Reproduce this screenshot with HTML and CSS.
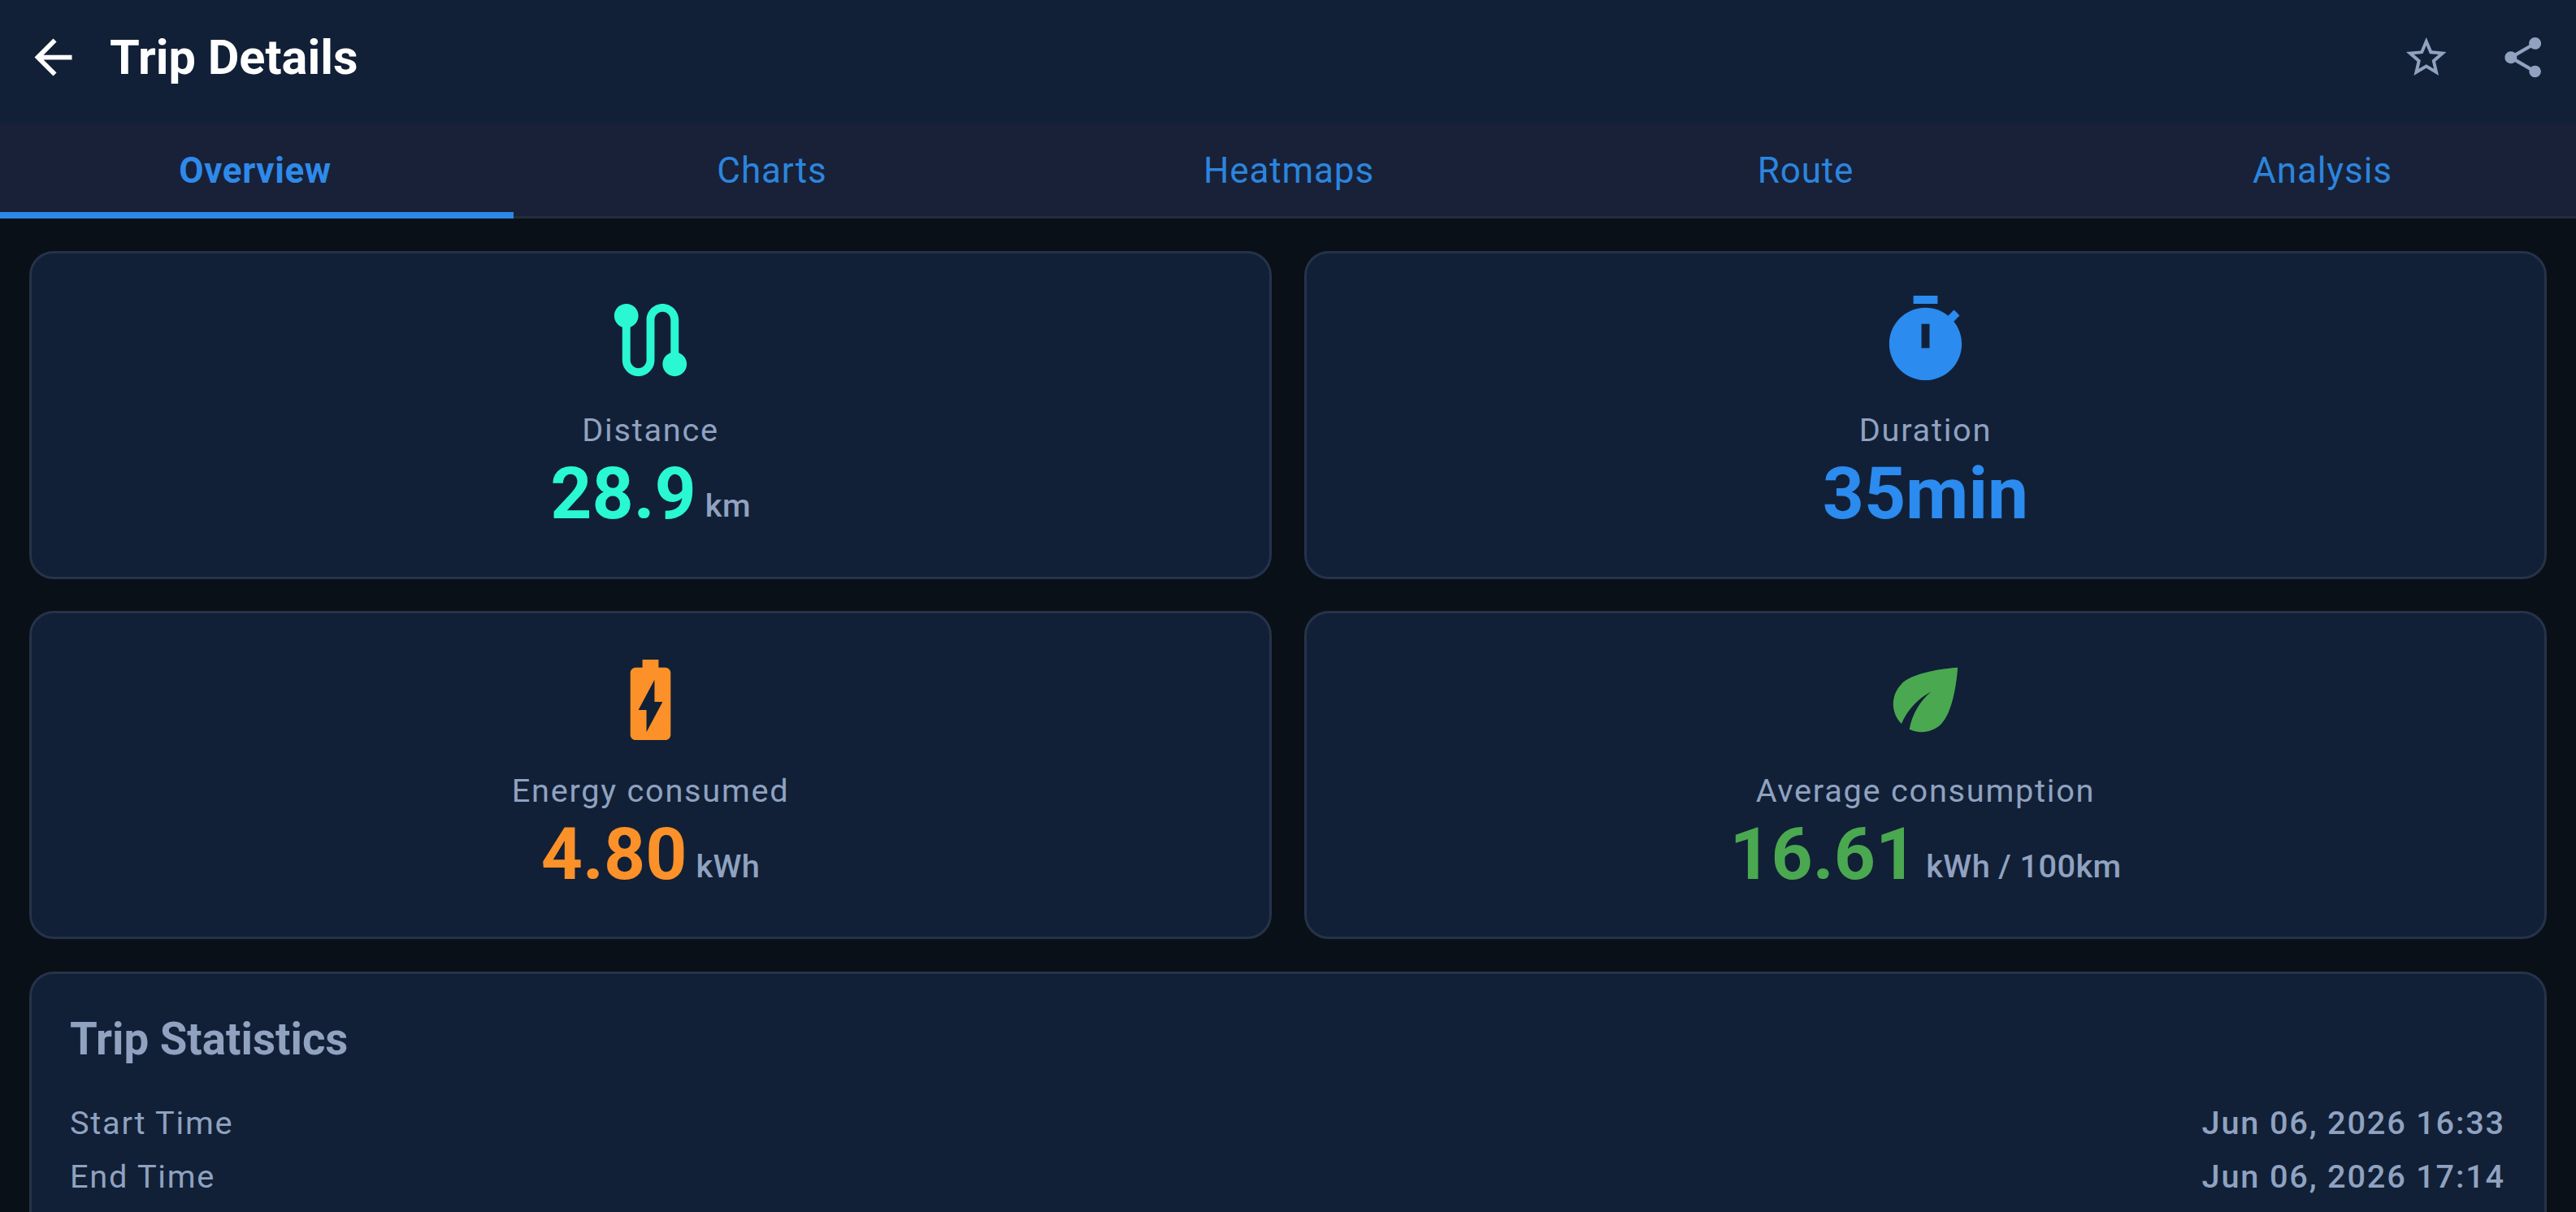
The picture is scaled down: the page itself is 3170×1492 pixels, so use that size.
FILE: index.html
```html
<!DOCTYPE html>
<html lang="en">
<head>
<meta charset="utf-8">
<title>Trip Details</title>
<link rel="stylesheet" href="styles.css">
</head>
<body>
<header class="app-bar">
  <svg class="back" viewBox="0 0 24 24"><path d="M20 11H7.83l5.59-5.59L12 4l-8 8 8 8 1.41-1.41L7.83 13H20v-2z"/></svg>
  <h1 class="app-title">Trip Details</h1>
  <div class="actions">
    <svg class="action" viewBox="0 0 24 24"><path d="M22 9.24l-7.19-.62L12 2 9.19 8.63 2 9.24l5.46 4.73L5.82 21 12 17.27 18.18 21l-1.63-7.03L22 9.24zM12 15.4l-3.76 2.27 1-4.28-3.32-2.88 4.38-.38L12 6.1l1.71 4.04 4.38.38-3.32 2.88 1 4.28L12 15.4z"/></svg>
    <svg class="action" viewBox="0 0 24 24"><path d="M18 16.08c-.76 0-1.44.3-1.96.77L8.91 12.7c.05-.23.09-.46.09-.7s-.04-.47-.09-.7l7.05-4.11c.54.5 1.25.81 2.04.81 1.66 0 3-1.34 3-3s-1.34-3-3-3-3 1.34-3 3c0 .24.04.47.09.7L8.04 9.81C7.5 9.31 6.79 9 6 9c-1.66 0-3 1.34-3 3s1.34 3 3 3c.79 0 1.5-.31 2.04-.81l7.12 4.16c-.05.21-.08.43-.08.65 0 1.61 1.31 2.92 2.92 2.92s2.92-1.31 2.92-2.92-1.31-2.92-2.92-2.92z"/></svg>
  </div>
</header>
<nav class="tabs">
  <a class="tab tab-active">Overview</a>
  <a class="tab">Charts</a>
  <a class="tab">Heatmaps</a>
  <a class="tab">Route</a>
  <a class="tab">Analysis</a>
</nav>
<main class="content">
  <section class="metrics">
    <article class="card metric teal">
      <svg class="metric-icon" viewBox="0 0 24 24"><path d="M19 15.18V7c0-2.21-1.79-4-4-4s-4 1.79-4 4v10c0 1.1-.9 2-2 2s-2-.9-2-2V8.82C8.16 8.4 9 7.3 9 6c0-1.66-1.34-3-3-3S3 4.34 3 6c0 1.3.84 2.4 2 2.82V17c0 2.21 1.79 4 4 4s4-1.79 4-4V7c0-1.1.9-2 2-2s2 .9 2 2v8.18c-1.16.41-2 1.51-2 2.82 0 1.66 1.34 3 3 3s3-1.34 3-3c0-1.3-.84-2.4-2-2.82z"/></svg>
      <div class="label">Distance</div>
      <div class="reading"><span class="value">28.9</span><span class="unit">km</span></div>
    </article>
    <article class="card metric blue">
      <svg class="metric-icon" viewBox="0 0 24 24"><path fill-rule="evenodd" d="M9 1h6v2H9zM19.03 7.39l1.42-1.42c-.43-.51-.9-.99-1.41-1.41l-1.42 1.42C16.07 4.74 14.12 4 12 4c-4.97 0-9 4.03-9 9s4.02 9 9 9 9-4.03 9-9c0-2.12-.74-4.07-1.97-5.61zM11 8h2v6h-2z"/></svg>
      <div class="label">Duration</div>
      <div class="reading"><span class="value">35min</span></div>
    </article>
    <article class="card metric orange">
      <svg class="metric-icon" viewBox="0 0 24 24"><path d="M15.67 4H14V2h-4v2H8.33C7.6 4 7 4.6 7 5.33v15.33C7 21.4 7.6 22 8.33 22h7.33c.74 0 1.34-.6 1.34-1.33V5.33C17 4.6 16.4 4 15.67 4zM11 20v-5.5H9L13 7v5.5h2L11 20z"/></svg>
      <div class="label">Energy consumed</div>
      <div class="reading"><span class="value">4.80</span><span class="unit">kWh</span></div>
    </article>
    <article class="card metric green">
      <svg class="metric-icon" viewBox="0 0 24 24"><path d="M6.05 8.05c-2.73 2.73-2.73 7.15-.02 9.88 1.47-3.4 4.09-6.24 7.36-7.93-2.77 2.34-4.71 5.61-5.39 9.32 2.6 1.23 5.8.78 7.95-1.37C19.43 14.47 20 4 20 4S9.53 4.57 6.05 8.05z"/></svg>
      <div class="label">Average consumption</div>
      <div class="reading"><span class="value">16.61</span><span class="unit">kWh / 100km</span></div>
    </article>
  </section>
  <section class="card stats">
    <h2 class="stats-title">Trip Statistics</h2>
    <div class="stat"><span>Start Time</span><span class="stat-value">Jun 06, 2026 16:33</span></div>
    <div class="stat"><span>End Time</span><span class="stat-value">Jun 06, 2026 17:14</span></div>
  </section>
</main>
</body>
</html>
```
FILE: styles.css
```css
* { box-sizing: border-box; }

body {
  margin: 0;
  height: 1492px;
  overflow: hidden;
  display: flex;
  flex-direction: column;
  background: #0a1017;
  color: #90a2c0;
  font-family: Roboto, sans-serif;
}

svg { display: block; fill: currentColor; flex: none; }

/* Top bar */
.app-bar {
  flex: none;
  height: 152px;
  padding: 0 36px 11px 31px;
  display: flex;
  align-items: center;
  background: #112037;
}
.back { width: 69px; height: 69px; color: #fff; }
.app-title {
  margin: 0 0 0 35px;
  font-size: 59.5px;
  line-height: 70px;
  font-weight: 700;
  color: #fff;
}
.actions { margin-left: auto; display: flex; gap: 59px; }
.action { width: 59.5px; height: 59.5px; }

/* Tabs */
.tabs {
  flex: none;
  height: 117px;
  display: grid;
  grid-template-columns: repeat(5, 632px);
  gap: 4px;
  width: 100%;
  overflow: hidden;
  background: #182138;
  box-shadow: inset 0 -3px #222c3b;
}
.tab {
  display: flex;
  align-items: center;
  justify-content: center;
  padding-right: 4px;
  padding-top: 7px;
  border-bottom: 8px solid transparent;
  font-size: 44px;
  line-height: 52px;
  letter-spacing: 0.9px;
  color: #2c85de;
}
.tab-active {
  font-weight: 700;
  letter-spacing: 0.6px;
  color: #2e8aea;
  border-bottom-color: #2c87e8;
}

/* Cards */
.content {
  flex: 1;
  padding: 40px 36px 0;
  display: flex;
  flex-direction: column;
  gap: 39.7px;
}
.card {
  background: #112037;
  border: 3px solid #25334a;
  border-radius: 30px;
}
.metrics {
  display: grid;
  grid-template-columns: 1fr 1fr;
  gap: 39.7px;
}
.metric {
  height: 403.7px;
  padding-top: 46.8px;
  display: flex;
  flex-direction: column;
  align-items: center;
}
.metric-icon { width: 119px; height: 119px; color: var(--accent); }
.label {
  margin-top: 24.7px;
  font-size: 39.7px;
  line-height: 56px;
  letter-spacing: 1.75px;
}
.reading { display: flex; align-items: flex-end; gap: 11px; }
.value {
  font-size: 89.3px;
  line-height: 100px;
  font-weight: 700;
  color: var(--accent);
}
.unit {
  margin-bottom: 11.2px;
  font-size: 39.7px;
  line-height: 48px;
  font-weight: 500;
  letter-spacing: 0.4px;
}
.teal { --accent: #29f8d2; }
.blue { --accent: #2b8bef; }
.orange { --accent: #fb9128; }
.green { --accent: #4aa850; }

/* Trip statistics */
.stats {
  flex: 1;
  padding: 48px 47px 0;
  border-bottom: 0;
  border-radius: 30px 30px 0 0;
}
.stats-title {
  margin: 0 0 39.7px;
  font-size: 54.6px;
  line-height: 64px;
  font-weight: 700;
}
.stat {
  display: flex;
  justify-content: space-between;
  font-size: 39.7px;
  line-height: 66px;
  letter-spacing: 1.75px;
}
.stat-value { margin-right: 1px; font-weight: 500; letter-spacing: 1.82px; }
```
